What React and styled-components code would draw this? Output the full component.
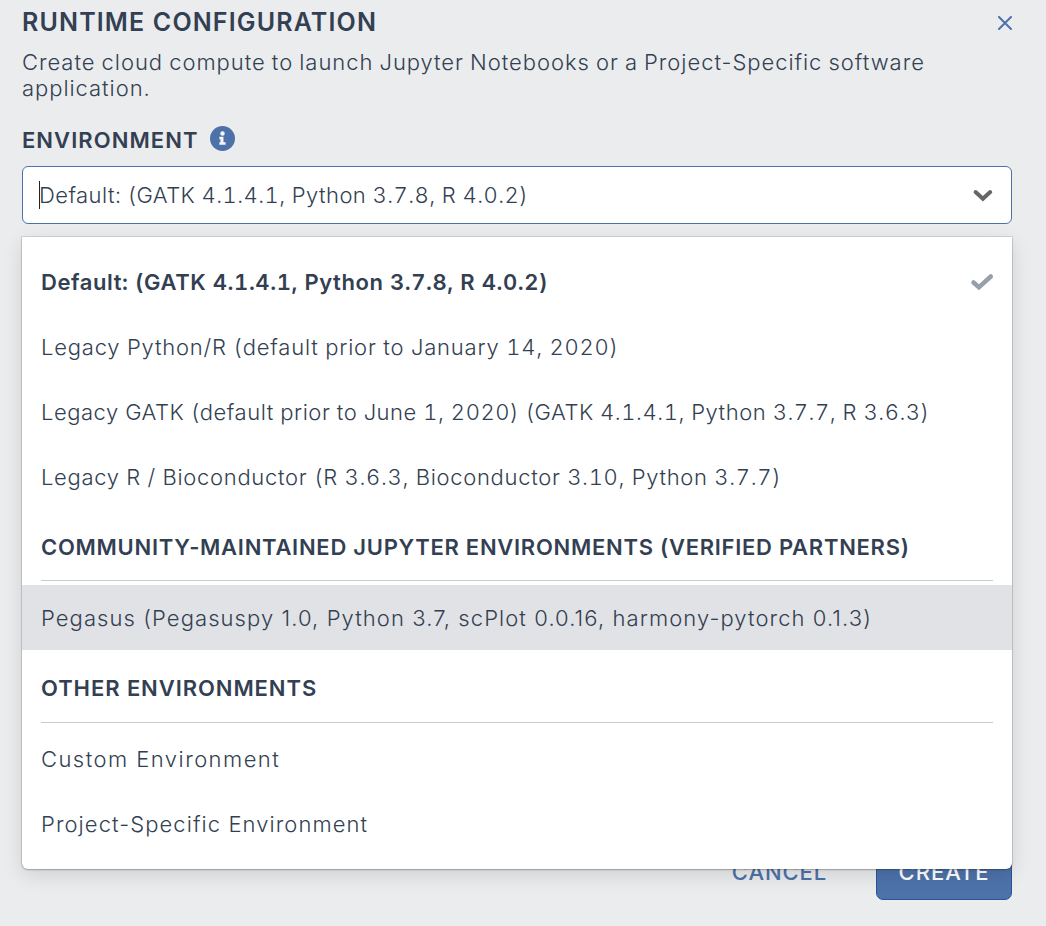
import React from 'react';
import styled, { createGlobalStyle } from 'styled-components';

const GlobalStyle = createGlobalStyle`
  *, *::before, *::after { box-sizing: border-box; }
  html, body { margin: 0; padding: 0; height: 100%; overflow: hidden; background: #ebecee; }
  body { font-family: Inter, "Open Sans", sans-serif; color: #333f52; }
`;

const Panel = styled.div`
  width: 1046px;
  height: 926px;
  padding: 8px 34px 0 22px;
  display: flex;
  flex-direction: column;
  background: #ebecee;
  font-size: 22px;
  font-weight: 350;
  overflow: hidden;
`;

const Header = styled.header`
  display: flex;
  align-items: center;
  justify-content: space-between;
  height: 29px;
`;

const Title = styled.h1`
  margin: 0;
  font-size: 25px;
  font-weight: 600;
  line-height: 29px;
  white-space: nowrap;
  letter-spacing: 1.15px;
`;

const CloseButton = styled.button`
  display: flex;
  padding: 0;
  border: 0;
  background: none;
  color: #4d72aa;
`;

const Description = styled.p`
  margin: 12px 0 0;
  line-height: 26px;
  white-space: nowrap;
  letter-spacing: 0.95px;
  word-spacing: -1px;
`;

const FieldLabel = styled.div`
  display: flex;
  align-items: center;
  gap: 12px;
  height: 26px;
  margin: 24px 0 15px;
  font-weight: 600;
`;

const Label = styled.span`
  line-height: 26px;
  padding-top: 3px;
  letter-spacing: 1.05px;
`;

const Select = styled.div`
  display: flex;
  align-items: center;
  justify-content: space-between;
  flex: none;
  height: 58px;
  padding: 0 17px 0 16px;
  border: 1px solid #4d72aa;
  border-radius: 6px;
  background: #fff;
`;

const SelectValue = styled.div`
  display: flex;
  align-items: center;
  white-space: nowrap;
  font-variant-numeric: tabular-nums;
  letter-spacing: 0.42px;
`;

const Caret = styled.span`
  width: 1px;
  height: 28px;
  margin-right: -1px;
  background: #222;
`;

const MenuAnchor = styled.div`
  position: relative;
  z-index: 1;
  height: 0;
`;

const Menu = styled.div`
  position: absolute;
  top: 13px;
  left: 0;
  right: 0;
  height: 632px;
  padding-top: 12.8px;
  border-radius: 0 0 6px 6px;
  background: #fff;
  box-shadow: 0 0 0 1px rgba(0, 0, 0, 0.1), 0 1px 2px rgba(0, 0, 0, 0.2), 0 6px 20px rgba(0, 0, 0, 0.12);
`;

const Option = styled.div`
  display: flex;
  align-items: center;
  justify-content: space-between;
  height: 64.8px;
  padding: 0 18px 0 19px;
  white-space: nowrap;
  font-weight: ${(p) => (p.$selected ? 600 : 350)};
  font-variant-numeric: ${(p) => (p.$tabular ? 'tabular-nums' : 'normal')};
  background: ${(p) => (p.$focused ? '#e1e2e5' : 'transparent')};
  letter-spacing: ${(p) => p.$track}px;
`;

const GroupHeading = styled.div`
  height: 72.4px;
  margin: 0 19px 4px;
  padding-top: 5px;
  border-bottom: 1px solid #c9cbd1;
  display: flex;
  align-items: center;
  font-weight: 600;
  white-space: nowrap;
  letter-spacing: ${(p) => p.$track}px;
`;

const Footer = styled.footer`
  display: flex;
  justify-content: flex-end;
  align-items: center;
  gap: 49px;
  height: 56px;
  margin-top: 620px;
  font-weight: 450;
`;

const CancelButton = styled.button`
  padding: 0;
  border: 0;
  background: none;
  color: #4d72aa;
  font: inherit;
  letter-spacing: 0.9px;
`;

const CreateButton = styled.button`
  width: 136px;
  height: 56px;
  padding: 0;
  border: 1px solid #2b5599;
  border-radius: 7px;
  background: #4d72aa;
  color: #fff;
  font: inherit;
  letter-spacing: 1px;
`;

const CloseIcon = () => (
  <svg width="14" height="14" viewBox="0 0 14 14" fill="none" stroke="currentColor" strokeWidth="2" strokeLinecap="round">
    <path d="M1 1l12 12M13 1L1 13" />
  </svg>
);

const InfoIcon = () => (
  <svg width="25" height="25" viewBox="0 0 512 512">
    <circle cx="256" cy="256" r="256" fill="#4d72aa" />
    <path d="M256 108a46 46 0 1 1 0 92a46 46 0 1 1 0-92zM320 384h-128v-50h22v-62h-22v-50h84v112h44z" fill="#f4f6f9" />
  </svg>
);

const ChevronIcon = () => (
  <svg width="22" height="14" viewBox="0 0 22 14" fill="none" stroke="#666" strokeWidth="4" strokeLinecap="round">
    <path d="M3.6 4l7.3 6.7L18.2 4" />
  </svg>
);

const CheckIcon = () => (
  <svg width="24" height="18" viewBox="0 0 24 18" fill="none" stroke="#979fab" strokeWidth="4.5" strokeLinecap="round">
    <path d="M3.5 9.5l5.4 4.8L20.8 3.5" />
  </svg>
);

export default function App() {
  return (
    <>
      <GlobalStyle />
      <Panel>
        <Header>
          <Title>RUNTIME CONFIGURATION</Title>
          <CloseButton aria-label="Close"><CloseIcon /></CloseButton>
        </Header>
        <Description>
          Create cloud compute to launch Jupyter Notebooks or a Project-Specific software
          <br />
          application.
        </Description>
        <FieldLabel>
          <Label>ENVIRONMENT</Label>
          <InfoIcon />
        </FieldLabel>
        <Select>
          <SelectValue><Caret />Default: (GATK 4.1.4.1, Python 3.7.8, R 4.0.2)</SelectValue>
          <ChevronIcon />
        </Select>
        <MenuAnchor>
          <Menu>
            <Option $selected $tabular $track={0.57}>Default: (GATK 4.1.4.1, Python 3.7.8, R 4.0.2)<CheckIcon /></Option>
            <Option $tabular $track={0.78}>Legacy Python/R (default prior to January 14, 2020)</Option>
            <Option $tabular $track={0.52}>Legacy GATK (default prior to June 1, 2020) (GATK 4.1.4.1, Python 3.7.7, R 3.6.3)</Option>
            <Option $tabular $track={0.69}>Legacy R / Bioconductor (R 3.6.3, Bioconductor 3.10, Python 3.7.7)</Option>
            <GroupHeading $track={0.72}>COMMUNITY-MAINTAINED JUPYTER ENVIRONMENTS (VERIFIED PARTNERS)</GroupHeading>
            <Option $focused $track={1.08}>Pegasus (Pegasuspy 1.0, Python 3.7, scPlot 0.0.16, harmony-pytorch 0.1.3)</Option>
            <GroupHeading $track={0.92}>OTHER ENVIRONMENTS</GroupHeading>
            <Option $track={1.45}>Custom Environment</Option>
            <Option $track={1.07}>Project-Specific Environment</Option>
          </Menu>
        </MenuAnchor>
        <Footer>
          <CancelButton>CANCEL</CancelButton>
          <CreateButton>CREATE</CreateButton>
        </Footer>
      </Panel>
    </>
  );
}
